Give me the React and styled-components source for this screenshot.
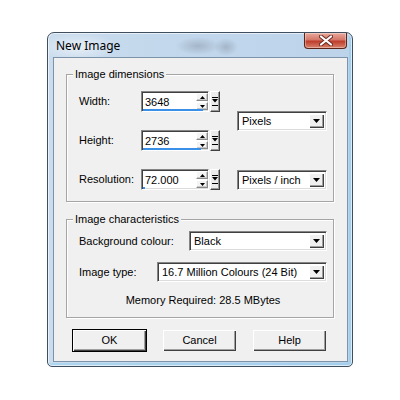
import React from 'react';
import styled, { createGlobalStyle } from 'styled-components';

const Global = createGlobalStyle`
  html, body { margin: 0; padding: 0; background: #ffffff; }
  body { font-family: "Liberation Sans", Arial, sans-serif; font-size: 11px; color: #000; }
  * { box-sizing: border-box; }
`;

const Page = styled.div`
  width: 400px;
  height: 400px;
  padding: 32px 0 0 47px;
`;

const Window = styled.div`
  width: 306px;
  height: 335px;
  border: 1px solid #404f60;
  border-radius: 7px 7px 5px 5px;
  padding: 0 4px 4px 5px;
  display: flex;
  flex-direction: column;
  background:
    radial-gradient(ellipse 22px 9px at 150px 13px, rgba(110,120,135,0.35), rgba(110,120,135,0) 100%),
    radial-gradient(ellipse 12px 9px at 178px 14px, rgba(110,120,135,0.35), rgba(110,120,135,0) 100%),
    radial-gradient(ellipse 40px 14px at 30px 14px, rgba(255,255,255,0.55), rgba(255,255,255,0) 100%),
    linear-gradient(to right, #cadced 0%, #c2d7ec 45%, #bcd3ea 100%);
  box-shadow: inset 0 0 0 1px rgba(255,255,255,0.6), inset -2px -2px 0 1px rgba(120,200,240,0.35);
`;

const TitleBar = styled.div`
  height: 24px;
  display: flex;
  align-items: flex-start;
  justify-content: space-between;
`;

const Title = styled.div`
  font-family: "Noto Sans", "Open Sans", sans-serif;
  font-size: 12px;
  line-height: 16px;
  padding: 5px 0 0 3px;
  color: #000;
`;

const CloseButton = styled.div`
  width: 43px;
  height: 16px;
  margin-right: 1px;
  border: 1px solid #5c2418;
  border-top: none;
  border-radius: 0 0 4px 4px;
  background: linear-gradient(to bottom, #e9a99b 0%, #d4776a 45%, #bf3d2c 55%, #d8826c 100%);
  box-shadow: inset 0 0 0 1px rgba(255,255,255,0.35);
  display: flex;
  align-items: center;
  justify-content: center;
`;

const Client = styled.div`
  flex: 1;
  border: 1px solid #7d93aa;
  background: #f0f0f0;
  padding: 16px 13px 0 12px;
  display: flex;
  flex-direction: column;
`;

const Group = styled.div`
  position: relative;
  border: 1px solid #a5a5a5;
  box-shadow: 1px 1px 0 #ffffff, inset 1px 1px 0 #ffffff;
  margin-top: ${p => p.$mt || 0}px;
  padding: ${p => p.$pad};
`;

const GroupTitle = styled.div`
  position: absolute;
  top: -7px;
  left: 6px;
  padding: 0 2px;
  line-height: 13px;
  background: #f0f0f0;
`;

const DimGrid = styled.div`
  display: grid;
  grid-template-columns: 62px 79px 1fr;
  grid-template-rows: repeat(3, 21px);
  row-gap: 18px;
  align-items: center;
`;

const Label = styled.div`
  line-height: 13px;
  white-space: nowrap;
`;

const Field = styled.div`
  display: flex;
  gap: 1px;
  height: 21px;
`;

const Sunken = styled.div`
  border: 1px solid;
  border-color: #858585 #ffffff #ffffff #858585;
  box-shadow: inset 1px 1px 0 #404040, inset -1px -1px 0 #dcdcdc;
  background: #ffffff;
  padding: 2px;
  width: ${p => p.$w}px;
  height: ${p => p.$h || 21}px;
  display: flex;
`;

const NumBox = styled(Sunken)`
  position: relative;
  padding: 1px 0 1px 1px;
`;

const NumValue = styled.div`
  flex: 1;
  padding: 2px 0 0 2px;
  line-height: 14px;
`;

const Spinner = styled.div`
  width: 12px;
  display: flex;
  flex-direction: column;
  gap: 1px;
`;

const Raised = styled.div`
  background: #f0f0f0;
  box-shadow: inset 1px 1px 0 #ffffff, inset -1px -1px 0 #404040, inset -2px -2px 0 #a0a0a0;
  display: flex;
  align-items: center;
  justify-content: center;
`;

const SpinHalf = styled.div`
  flex: 1;
  background: #f4f4f4;
  border: 1px solid;
  border-color: #ffffff #8a8a8a #8a8a8a #ffffff;
  box-shadow: inset -1px -1px 0 #c8c8c8;
  display: flex;
  align-items: center;
  justify-content: center;
`;

const Bar = styled.div`
  position: absolute;
  left: 1px;
  bottom: 0;
  height: 2px;
  background: #3a8fe6;
`;

const UnitButton = styled.div`
  width: 10px;
  height: 21px;
  background: #ececec;
  border: 1px solid;
  border-color: #ffffff #404040 #404040 #ffffff;
  box-shadow: inset -1px -1px 0 #9a9a9a;
  display: flex;
  align-items: center;
  justify-content: center;
`;

const SelectBox = styled(Sunken)`
  align-items: stretch;
  justify-self: ${p => p.$justify || 'auto'};
  margin-left: ${p => p.$ml || 0}px;
  grid-row: ${p => p.$row || 'auto'};
  grid-column: ${p => p.$col || 'auto'};
  align-self: center;
`;

const SelectText = styled.div`
  flex: 1;
  padding-left: 2px;
  line-height: 14px;
  white-space: nowrap;
`;

const DropButton = styled(Raised)`
  width: 15px;
`;

const CharRow = styled.div`
  display: flex;
  align-items: center;
  justify-content: space-between;
  height: 20px;
  margin-top: ${p => p.$mt || 0}px;
`;

const Memory = styled.div`
  text-align: center;
  line-height: 13px;
  margin-top: 12px;
`;

const ButtonRow = styled.div`
  display: flex;
  justify-content: center;
  gap: 15px;
  margin-top: 11px;
  padding-right: 1px;
`;

const PushButton = styled.div`
  width: 75px;
  height: 23px;
  background: #f0f0f0;
  border: 1px solid ${p => (p.$default ? '#000000' : '#f0f0f0')};
  box-shadow: inset 1px 1px 0 #ffffff, inset -1px -1px 0 #404040, inset -2px -2px 0 #a0a0a0;
  display: flex;
  align-items: center;
  justify-content: center;
  line-height: 13px;
`;

const Tri = ({ w = 7, h = 4, up }) => (
  <svg width={w} height={h} viewBox={`0 0 ${w} ${h}`}>
    <polygon
      points={up ? `0,${h} ${w},${h} ${w / 2},0` : `0,0 ${w},0 ${w / 2},${h}`}
      fill="#000"
    />
  </svg>
);

const UnitGlyph = () => (
  <svg width="6" height="9" viewBox="0 0 6 9">
    <rect x="0" y="0" width="6" height="1" fill="#000" />
    <polygon points="0,2 6,2 3,5.5" fill="#000" />
    <rect x="0" y="8" width="6" height="1" fill="#000" />
  </svg>
);

const CloseGlyph = () => (
  <svg width="14" height="11" viewBox="0 0 14 11">
    <path d="M2 1.5 L12 9.5 M12 1.5 L2 9.5" stroke="#6a2a22" strokeWidth="4" strokeLinecap="round" />
    <path d="M2 1.5 L12 9.5 M12 1.5 L2 9.5" stroke="#ffffff" strokeWidth="2.2" strokeLinecap="round" />
  </svg>
);

const NumberField = ({ value, fill }) => (
  <Field>
    <NumBox $w={68}>
      <NumValue>{value}</NumValue>
      <Spinner>
        <SpinHalf><Tri w={5} h={3} up /></SpinHalf>
        <SpinHalf><Tri w={5} h={3} /></SpinHalf>
      </Spinner>
      <Bar style={{ width: `${fill}px` }} />
    </NumBox>
    <UnitButton><UnitGlyph /></UnitButton>
  </Field>
);

const Select = ({ text, w, ...rest }) => (
  <SelectBox $w={w} $h={20} {...rest}>
    <SelectText>{text}</SelectText>
    <DropButton><Tri w={7} h={4} /></DropButton>
  </SelectBox>
);

export default function App() {
  return (
    <>
      <Global />
      <Page>
        <Window>
          <TitleBar>
            <Title>New Image</Title>
            <CloseButton><CloseGlyph /></CloseButton>
          </TitleBar>
          <Client>
            <Group $pad="16px 6px 11px 12px">
              <GroupTitle>Image dimensions</GroupTitle>
              <DimGrid>
                <Label>Width:</Label>
                <NumberField value="3648" fill={60} />
                <Select text="Pixels" w={90} $ml={17} $row="1 / 3" $col="3" $justify="start" />
                <Label>Height:</Label>
                <NumberField value="2736" fill={58} />
                <Label>Resolution:</Label>
                <NumberField value="72.000" fill={2} />
                <Select text="Pixels / inch" w={90} $ml={17} $row="3" $col="3" $justify="start" />
              </DimGrid>
            </Group>
            <Group $mt={17} $pad="11px 6px 10px 12px">
              <GroupTitle>Image characteristics</GroupTitle>
              <CharRow>
                <Label>Background colour:</Label>
                <Select text="Black" w={138} />
              </CharRow>
              <CharRow $mt={11}>
                <Label>Image type:</Label>
                <Select text="16.7 Million Colours (24 Bit)" w={170} />
              </CharRow>
              <Memory>Memory Required: 28.5 MBytes</Memory>
            </Group>
            <ButtonRow>
              <PushButton $default>OK</PushButton>
              <PushButton>Cancel</PushButton>
              <PushButton>Help</PushButton>
            </ButtonRow>
          </Client>
        </Window>
      </Page>
    </>
  );
}
